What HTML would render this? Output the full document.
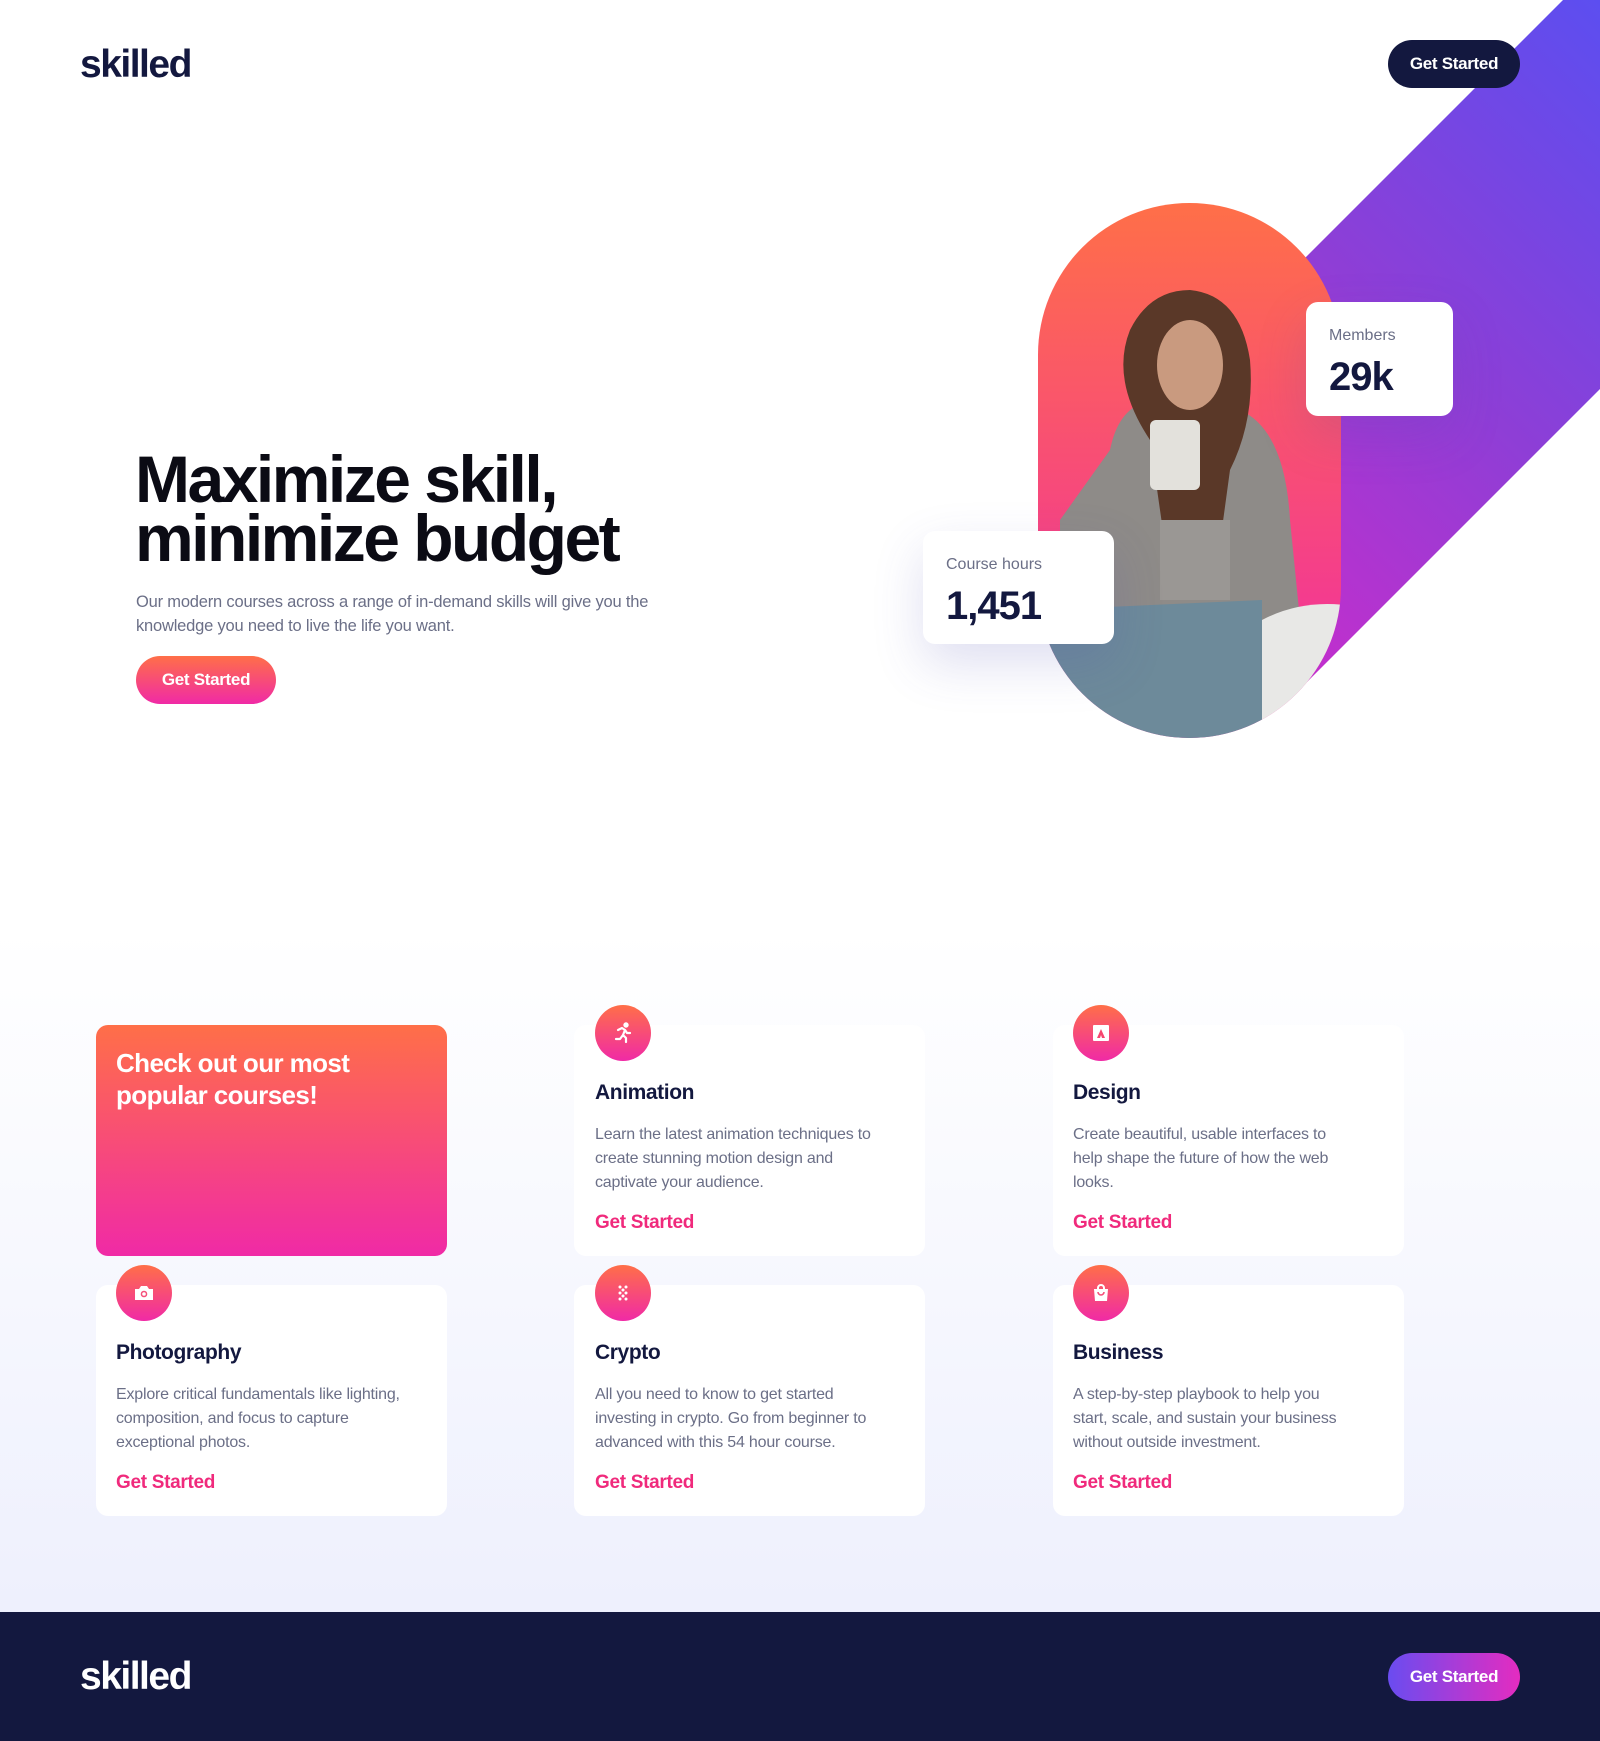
<!DOCTYPE html>
<html><head><meta charset="utf-8"><style>
*{margin:0;padding:0;box-sizing:border-box}
body{width:1600px;height:1741px;position:relative;overflow:hidden;font-family:"Liberation Sans",sans-serif;background:#fff;color:#13183f}
.abs{position:absolute}
.logo{font-weight:bold;font-size:39px;letter-spacing:-1.5px;color:#13183f}
.btn{border-radius:24px;color:#fff;font-weight:bold;font-size:17px;display:flex;align-items:center;justify-content:center;letter-spacing:-0.3px}
.card{background:#fff;border-radius:12px;position:absolute;width:351px;height:231px}
.ic{position:absolute;width:56px;height:56px;border-radius:50%;background:linear-gradient(#ff6f48,#f02aa6);display:flex;align-items:center;justify-content:center}
.t{position:absolute;font-weight:bold;font-size:21px;letter-spacing:-0.4px;color:#13183f}
.d{position:absolute;font-size:16px;line-height:24px;color:#6b6f87;width:284px;letter-spacing:-0.2px}
.l{position:absolute;font-weight:bold;font-size:19px;color:#f02a7c;letter-spacing:-0.3px}
.stat{position:absolute;background:#fff;border-radius:12px;box-shadow:0 20px 50px rgba(80,80,180,.18)}
.stat .a{position:absolute;left:23px;top:25px;font-size:16px;color:#6b6f87}
.stat .b{position:absolute;left:23px;top:53px;font-size:40px;font-weight:bold;letter-spacing:-1px;color:#13183f}
</style></head><body>
<div class="abs" style="left:0;top:930px;width:1600px;height:682px;background:linear-gradient(#fff,#eef0fd)"></div>

<svg class="abs" style="left:0;top:0" width="1600" height="760">
<defs><linearGradient id="bg" x1="1" y1="0" x2="0.3" y2="1"><stop offset="0" stop-color="#5c4ef0"/><stop offset="0.5" stop-color="#8e3ed6"/><stop offset="1" stop-color="#cc2ccb"/></linearGradient>
<linearGradient id="ov" x1="0" y1="0" x2="0" y2="1"><stop offset="0" stop-color="#ff6f48"/><stop offset="1" stop-color="#f02aa6"/></linearGradient>
<clipPath id="oc"><rect x="1038" y="203" width="303" height="535" rx="151.5"/></clipPath></defs>
<polygon points="1563,0 1600,0 1600,389 1290,699 1100,509 1100,463" fill="url(#bg)"/>
<rect x="1038" y="203" width="303" height="535" rx="151.5" fill="url(#ov)"/>
<g clip-path="url(#oc)">
<path d="M1110,450 Q1120,400 1160,400 L1240,410 Q1285,430 1290,520 L1300,620 L1060,620 L1060,520 Z" fill="#8e8b88"/>
<path d="M1150,440 Q1110,380 1130,330 Q1150,290 1190,290 Q1240,295 1250,360 Q1255,420 1230,470 L1215,580 L1170,580 Z" fill="#5a3828"/>
<ellipse cx="1190" cy="365" rx="33" ry="45" fill="#c99a7f"/>
<rect x="1150" y="420" width="50" height="70" rx="6" fill="#e3e1dc"/>
<rect x="1160" y="520" width="70" height="80" fill="#9a9794"/>
<path d="M1040,610 L1262,600 L1262,740 L1040,740 Z" fill="#6d8a9a"/>
<path d="M1262,620 Q1300,600 1345,605 L1345,740 L1262,740 Z" fill="#e8e8e6"/>
</g>
</svg>

<div class="abs logo" style="left:80px;top:43px">skilled</div>
<div class="abs btn" style="left:1388px;top:40px;width:132px;height:48px;background:#13183f">Get Started</div>

<div class="stat" style="left:1306px;top:302px;width:147px;height:114px"><div class="a">Members</div><div class="b">29k</div></div>
<div class="stat" style="left:923px;top:531px;width:191px;height:113px"><div class="a">Course hours</div><div class="b">1,451</div></div>

<div class="abs" style="left:135px;top:450px;font-size:66px;font-weight:bold;line-height:59px;letter-spacing:-2.5px;color:#0b0b14">Maximize skill,<br>minimize budget</div>
<div class="abs" style="left:136px;top:590px;font-size:16.5px;line-height:24px;color:#6b6f87;width:560px;letter-spacing:-0.2px">Our modern courses across a range of in-demand skills will give you the knowledge you need to live the life you want.</div>
<div class="abs btn" style="left:136px;top:656px;width:140px;height:48px;background:linear-gradient(#ff6f48,#f02aa6)">Get Started</div>

<div class="card" style="left:96px;top:1025px;background:linear-gradient(#ff6f48,#f02aa6)"></div>
<div class="abs" style="left:116px;top:1047px;font-size:26px;line-height:32px;font-weight:bold;color:#fff;letter-spacing:-0.6px">Check out our most<br>popular courses!</div>

<div class="card" style="left:574px;top:1025px"></div>
<div class="card" style="left:1053px;top:1025px"></div>
<div class="card" style="left:96px;top:1285px"></div>
<div class="card" style="left:574px;top:1285px"></div>
<div class="card" style="left:1053px;top:1285px"></div>

<div class="ic" style="left:595px;top:1005px"><svg width="24" height="24" viewBox="0 0 24 24" fill="none" stroke="#fff" stroke-width="2.2" stroke-linecap="round" stroke-linejoin="round"><circle cx="15" cy="4" r="1.6" fill="#fff"/><path d="M7 9l4-2 3 2-2 5 3 3v4M12 14l-3 4H5M14 9l2 3h3"/></svg></div>
<div class="t" style="left:595px;top:1081px">Animation</div>
<div class="d" style="left:595px;top:1123px">Learn the latest animation techniques to create stunning motion design and captivate your audience.</div>
<div class="l" style="left:595px;top:1212px">Get Started</div>

<div class="ic" style="left:1073px;top:1005px"><svg width="20" height="20" viewBox="0 0 20 20"><rect x="2" y="2" width="16" height="16" rx="1" fill="#fff"/><path d="M6 15l4-9 4 9h-3l-1-3-1 3z" fill="#f6466f"/></svg></div>
<div class="t" style="left:1073px;top:1081px">Design</div>
<div class="d" style="left:1073px;top:1123px">Create beautiful, usable interfaces to help shape the future of how the web looks.</div>
<div class="l" style="left:1073px;top:1212px">Get Started</div>

<div class="ic" style="left:116px;top:1265px"><svg width="22" height="20" viewBox="0 0 22 20"><path d="M2 6h4l2-3h6l2 3h4v11H2z" fill="#fff"/><circle cx="11" cy="11" r="3.3" fill="#f5507a"/><circle cx="11" cy="11" r="1.8" fill="#fff"/></svg></div>
<div class="t" style="left:116px;top:1341px">Photography</div>
<div class="d" style="left:116px;top:1383px">Explore critical fundamentals like lighting, composition, and focus to capture exceptional photos.</div>
<div class="l" style="left:116px;top:1472px">Get Started</div>

<div class="ic" style="left:595px;top:1265px"><svg width="20" height="20" viewBox="0 0 20 20" fill="#fff"><circle cx="7" cy="4" r="1.5"/><circle cx="13" cy="4" r="1.5"/><circle cx="10" cy="7" r="1.5"/><circle cx="7" cy="10" r="1.5"/><circle cx="13" cy="10" r="1.5"/><circle cx="10" cy="13" r="1.5"/><circle cx="7" cy="16" r="1.5"/><circle cx="13" cy="16" r="1.5"/></svg></div>
<div class="t" style="left:595px;top:1341px">Crypto</div>
<div class="d" style="left:595px;top:1383px">All you need to know to get started investing in crypto. Go from beginner to advanced with this 54 hour course.</div>
<div class="l" style="left:595px;top:1472px">Get Started</div>

<div class="ic" style="left:1073px;top:1265px"><svg width="20" height="20" viewBox="0 0 20 20"><path d="M3 6h14l-1 12H4z" fill="#fff"/><path d="M7 8V5a3 3 0 0 1 6 0v3" stroke="#fff" stroke-width="2" fill="none"/><path d="M7 9a3 3 0 0 0 6 0" stroke="#f5507a" stroke-width="1.6" fill="none"/></svg></div>
<div class="t" style="left:1073px;top:1341px">Business</div>
<div class="d" style="left:1073px;top:1383px">A step-by-step playbook to help you start, scale, and sustain your business without outside investment.</div>
<div class="l" style="left:1073px;top:1472px">Get Started</div>

<div class="abs" style="left:0;top:1612px;width:1600px;height:129px;background:#13183f"></div>
<div class="abs logo" style="left:80px;top:1655px;color:#fff">skilled</div>
<div class="abs btn" style="left:1388px;top:1653px;width:132px;height:48px;background:linear-gradient(90deg,#6a4cf0,#e42cc0)">Get Started</div>
</body></html>
